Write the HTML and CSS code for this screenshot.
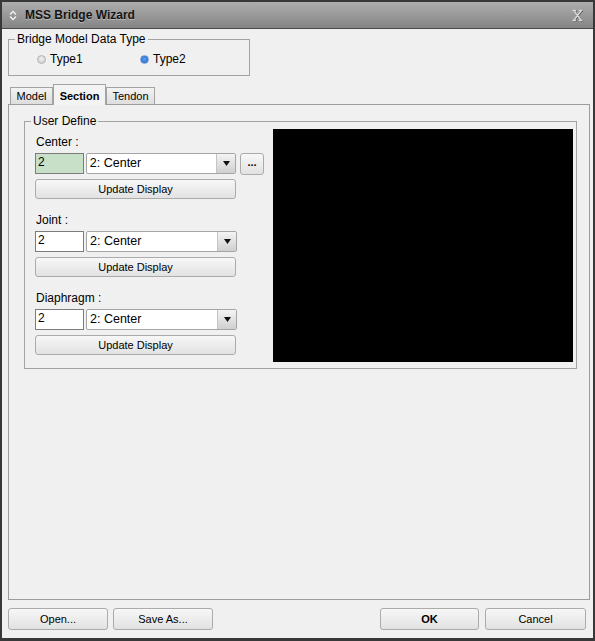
FILE: index.html
```html
<!DOCTYPE html>
<html>
<head>
<meta charset="utf-8">
<link rel="stylesheet" href="styles.css">
</head>
<body>
<div class="window">
  <div class="titlebar">
    <svg class="ticon" width="8" height="11" viewBox="0 0 8 11"><path d="M1 4.5 L4 1.5 L7 4.5 M1 6.5 L4 9.5 L7 6.5" fill="none" stroke="#f2f2f2" stroke-width="1.4"/></svg>
    <span class="title">MSS Bridge Wizard</span>
    <svg class="close" width="13" height="13" viewBox="0 0 13 13">
      <g fill="none" stroke="#5a5a5a" stroke-width="1.6" transform="translate(0.6,0.6)">
        <path d="M3 2 L10 11 M10 2 L3 11 M1.5 1.5 H5 M8 1.5 H11.5 M1.5 11.5 H5 M8 11.5 H11.5"/>
      </g>
      <g fill="none" stroke="#d9d9d9" stroke-width="1.4">
        <path d="M3 2 L10 11 M10 2 L3 11 M1.5 1.5 H5 M8 1.5 H11.5 M1.5 11.5 H5 M8 11.5 H11.5"/>
      </g>
    </svg>
  </div>
  <div class="content">
    <fieldset class="group type-group">
      <legend>Bridge Model Data Type</legend>
      <div class="radios">
        <label class="radio"><span class="dot"></span>Type1</label>
        <label class="radio"><span class="dot on"></span>Type2</label>
      </div>
    </fieldset>
    <div class="tabs">
      <div class="tab t-model">Model</div>
      <div class="tab t-section active">Section</div>
      <div class="tab t-tendon">Tendon</div>
    </div>
    <div class="panel">
      <fieldset class="group user">
        <legend>User Define</legend>
        <div class="ud-body">
          <div class="fields">
            <div class="field">
              <div class="flabel">Center :</div>
              <div class="row">
                <div class="num green">2</div>
                <div class="select"><span class="sval">2: Center</span><span class="arrow"><svg width="7" height="5" viewBox="0 0 7 5"><path d="M0 0 H7 L3.5 5 Z" fill="#111"/></svg></span></div>
                <div class="btn dots">...</div>
              </div>
              <div class="btn update">Update Display</div>
            </div>
            <div class="field">
              <div class="flabel">Joint :</div>
              <div class="row">
                <div class="num">2</div>
                <div class="select"><span class="sval">2: Center</span><span class="arrow"><svg width="7" height="5" viewBox="0 0 7 5"><path d="M0 0 H7 L3.5 5 Z" fill="#111"/></svg></span></div>
              </div>
              <div class="btn update">Update Display</div>
            </div>
            <div class="field">
              <div class="flabel">Diaphragm :</div>
              <div class="row">
                <div class="num">2</div>
                <div class="select"><span class="sval">2: Center</span><span class="arrow"><svg width="7" height="5" viewBox="0 0 7 5"><path d="M0 0 H7 L3.5 5 Z" fill="#111"/></svg></span></div>
              </div>
              <div class="btn update">Update Display</div>
            </div>
          </div>
          <div class="preview"></div>
        </div>
      </fieldset>
    </div>
    <div class="footer">
      <div class="btn fbtn">Open...</div>
      <div class="btn fbtn save">Save As...</div>
      <div class="btn fbtn ok">OK</div>
      <div class="btn fbtn cancel">Cancel</div>
    </div>
  </div>
</div>
</body>
</html>
```
FILE: styles.css
```css
body {
  margin: 0;
  background: #f0f0f0;
  font-family: "Liberation Sans", Arial, sans-serif;
  color: #000;
}

.window {
  width: 595px;
  height: 641px;
  box-sizing: border-box;
  border: 2px solid #383838;
  border-bottom-width: 3px;
  display: flex;
  flex-direction: column;
  background: #f0f0f0;
}

.titlebar {
  flex: none;
  height: 26px;
  background: linear-gradient(#adadad, #858585);
  border-bottom: 1px solid #4a4a4a;
  display: flex;
  align-items: center;
  padding: 0 9px 0 7px;
}

.ticon {
  display: block;
  flex: none;
}

.title {
  margin-left: 8px;
  font-weight: bold;
  font-size: 12px;
  color: #141414;
  text-shadow: 0 1px 0 rgba(255, 255, 255, 0.35);
}

.close {
  margin-left: auto;
  display: block;
}

.content {
  flex: 1;
  min-height: 0;
  display: flex;
  flex-direction: column;
  padding: 3px 3px 0 6px;
}

.group {
  margin: 0;
  min-width: 0;
  border: 1px solid #a3a3a3;
  box-sizing: border-box;
}

.group legend {
  padding: 0 2px;
  font-size: 12px;
  line-height: 14px;
}

.type-group {
  flex: none;
  width: 242px;
  padding: 5px 0 8px 6px;
}

.radios {
  display: flex;
  margin-left: 22px;
}

.radio {
  display: flex;
  align-items: center;
  width: 103px;
  height: 16px;
  font-size: 12px;
}

.dot {
  width: 9px;
  height: 9px;
  box-sizing: border-box;
  border-radius: 50%;
  margin-right: 4px;
  border: 1px solid #b4b4b4;
  background: radial-gradient(circle at 50% 40%, #f2f2f2, #c6c6c6);
}

.dot.on {
  border-color: #7d9fd0;
  background: radial-gradient(circle at 50% 45%, #5fa2f0 0, #2d6fd0 70%);
}

.tabs {
  flex: none;
  margin-top: 8px;
  height: 20px;
  display: flex;
  align-items: flex-end;
  padding-left: 2px;
  position: relative;
  z-index: 1;
}

.tab {
  height: 17px;
  box-sizing: border-box;
  border: 1px solid #a3a3a3;
  border-bottom: none;
  font-size: 11px;
  line-height: 16px;
  text-align: center;
  background: linear-gradient(#f3f3f3, #dedede);
}

.t-model { width: 43px; }
.t-section { width: 53px; }
.t-tendon { width: 49px; }

.tab.active {
  height: 21px;
  margin-bottom: -1px;
  background: #f3f3f3;
  font-weight: bold;
  line-height: 22px;
  border-right: 1px solid #a3a3a3;
}

.panel {
  flex: 1;
  min-height: 0;
  border: 1px solid #9c9c9c;
  padding: 9px 12px 0 15px;
}

.user {
  padding: 1px 4px 6px 10px;
}

.user legend {
  margin-left: -4px;
}

.ud-body {
  display: flex;
  gap: 9px;
}

.fields {
  width: 229px;
  padding-top: 5px;
}

.field {
  margin-bottom: 13px;
}

.field:last-child {
  margin-bottom: 0;
}

.flabel {
  font-size: 12px;
  line-height: 16px;
  margin-bottom: 3px;
  padding-left: 1px;
}

.row {
  display: flex;
  align-items: center;
  height: 21px;
}

.num {
  width: 49px;
  height: 21px;
  box-sizing: border-box;
  border: 1px solid #7c7c7c;
  background: #fff;
  font-size: 12px;
  line-height: 14px;
  padding: 1px 2px;
}

.num.green {
  background: #c7e0c7;
}

.select {
  margin-left: 2px;
  width: 151px;
  height: 21px;
  box-sizing: border-box;
  border: 1px solid #a5a5a5;
  border-radius: 2px;
  background: #fff;
  display: flex;
  align-items: stretch;
}

.sval {
  flex: 1;
  font-size: 12.5px;
  line-height: 19px;
  padding-left: 3px;
}

.arrow {
  width: 18px;
  border-left: 1px solid #c4c4c4;
  background: linear-gradient(#f4f4f4, #cfcfcf);
  display: flex;
  align-items: center;
  justify-content: center;
  border-radius: 0 1px 1px 0;
}

.arrow svg {
  display: block;
}

.btn {
  box-sizing: border-box;
  border: 1px solid #ababab;
  border-radius: 3px;
  background: linear-gradient(#f7f7f7, #e2e2e2);
  font-size: 11px;
  text-align: center;
  display: flex;
  align-items: center;
  justify-content: center;
}

.dots {
  margin-left: 4px;
  width: 24px;
  height: 22px;
  font-weight: bold;
  font-size: 11px;
  padding-bottom: 3px;
}

.update {
  margin-top: 5px;
  width: 201px;
  height: 20px;
}

.preview {
  width: 300px;
  height: 233px;
  background: #000;
  flex: none;
}

.footer {
  flex: none;
  display: flex;
  padding: 8px 4px 8px 0;
}

.fbtn {
  height: 22px;
  width: 100px;
}

.save {
  margin-left: 5px;
}

.ok {
  margin-left: auto;
  width: 99px;
  font-weight: bold;
}

.cancel {
  margin-left: 6px;
  width: 101px;
}
```
